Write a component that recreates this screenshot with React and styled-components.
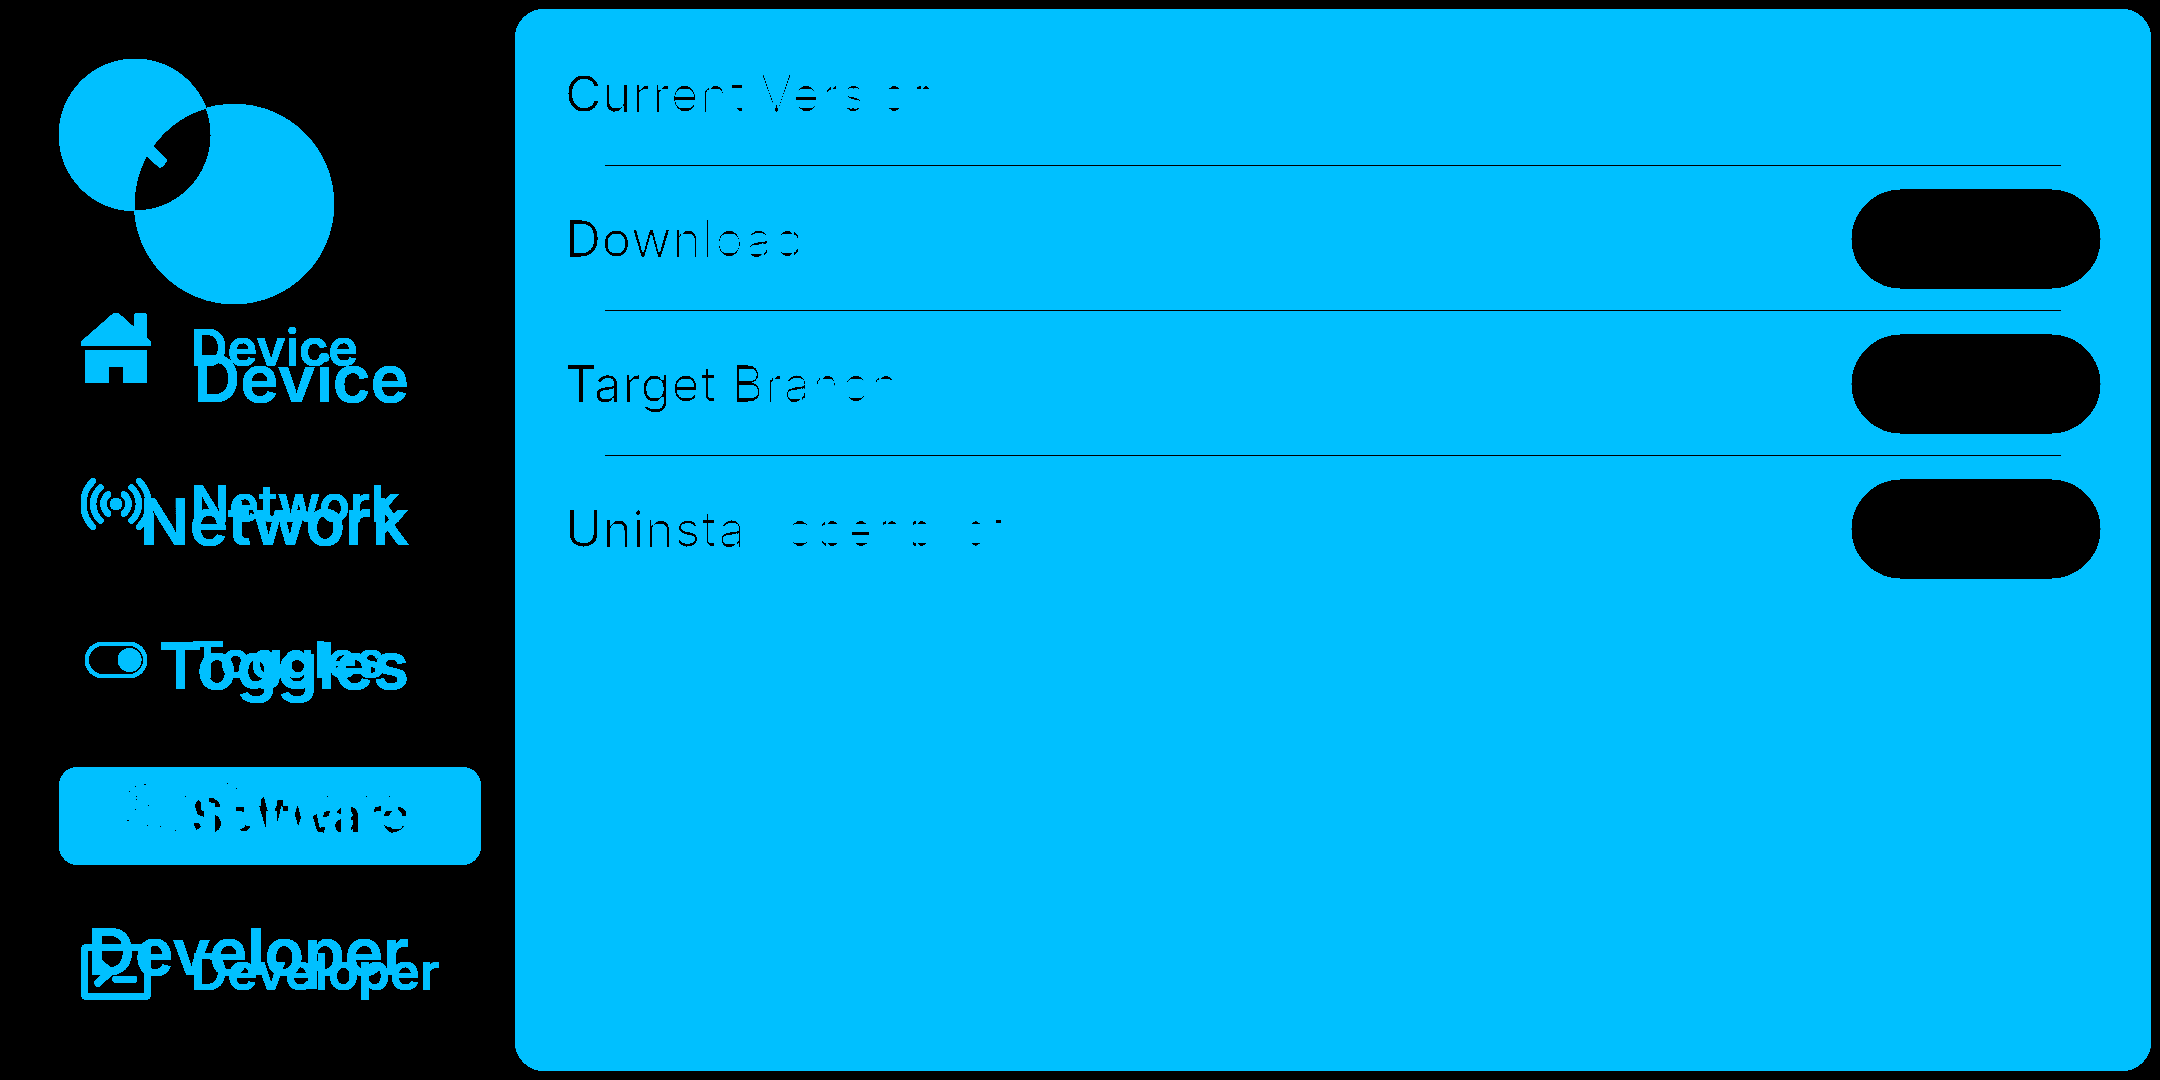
import React from "react";
import styled, { createGlobalStyle } from "styled-components";

const BLUE = "#00c0ff";

const GlobalStyle = createGlobalStyle`
  * { box-sizing: border-box; }
  body { margin: 0; background: #000; overflow: hidden; }
`;

const Screen = styled.div`
  display: flex;
  width: 2160px;
  height: 1080px;
  background: #000;
  color: ${BLUE};
  font-family: Inter, "Liberation Sans", sans-serif;
  filter: url(#two-tone);
`;

const Defs = styled.svg`
  position: absolute;
  width: 0;
  height: 0;
`;

const Sidebar = styled.aside`
  width: 515px;
  flex: none;
  display: grid;
  grid-template-rows: 270px 1fr;
  padding-left: 59px;
`;

const Logo = styled.svg`
  grid-area: 1 / 1;
  width: 276px;
  height: 246px;
  margin-top: 59px;
`;

const IconNav = styled.nav`
  grid-area: 2 / 1;
  display: flex;
  flex-direction: column;
`;

const NavRow = styled.div`
  height: 156px;
  display: flex;
  align-items: center;
`;

const NavPill = styled.div`
  display: grid;
  grid-template-columns: 70px 1fr;
  column-gap: 40px;
  align-items: center;
  width: 422px;
  height: 98px;
  padding-left: 22px;
  border-radius: 20px;
  background: ${(p) => (p.$active ? BLUE : "transparent")};
`;

const Icon = styled.svg`
  width: 70px;
  height: 70px;
  display: block;
`;

const SmallLabel = styled.span`
  font-size: 50.4px;
  font-weight: 600;
  line-height: 60px;
  white-space: nowrap;
  color: ${(p) => (p.$dark ? "#000" : BLUE)};
`;

const TextNav = styled.nav`
  grid-area: 2 / 1;
  display: flex;
  flex-direction: column;
  width: 350px;
  padding-top: 37px;
`;

const BigLabel = styled.span`
  height: 143.3px;
  line-height: 143.3px;
  font-size: 65px;
  font-weight: 600;
  text-align: right;
  white-space: nowrap;
`;

const Overlap = styled.div`
  position: absolute;
  left: 59px;
  top: 767px;
  width: 422px;
  height: 98px;
  border-radius: 20px;
  background: ${BLUE};
  color: #000;
  mix-blend-mode: lighten;
  display: flex;
  align-items: center;
  justify-content: flex-end;
  padding: 0 72px 14px 0;
`;

const OverlapLabel = styled.span`
  font-size: 65px;
  font-weight: 600;
  line-height: 80px;
`;

const Specks = styled.svg`
  position: absolute;
  left: 50px;
  top: 750px;
  width: 450px;
  height: 130px;
`;

const Panel = styled.main`
  width: 1636px;
  height: 1062px;
  margin-top: 9px;
  padding: 12px 50px 0 50px;
  border-radius: 30px;
  background: ${BLUE};
  isolation: isolate;
`;

const Row = styled.div`
  height: 145px;
  display: grid;
  grid-template-columns: 1fr 250px;
  grid-template-rows: 144px 1px;
  align-items: center;
`;

const Title = styled.span`
  grid-area: 1 / 1;
  height: 144px;
  line-height: 147px;
  font-size: 50px;
  font-weight: 400;
  white-space: nowrap;
  color: #000;
  background: ${BLUE};
`;

const TitleOverlay = styled(Title)`
  letter-spacing: ${(p) => p.$tracking}px;
  word-spacing: ${(p) => p.$wordGap || 0}px;
  mix-blend-mode: lighten;
`;

const ActionButton = styled.button`
  grid-area: 1 / 2;
  height: 100px;
  margin-top: 1px;
  border: 0;
  border-radius: 50px;
  background: #000;
`;

const Divider = styled.hr`
  grid-area: 2 / 1 / 3 / 3;
  width: auto;
  height: 1px;
  margin: 0 40px 0 40px;
  border: 0;
  background: #000;
`;

const HomeIcon = () => (
  <Icon viewBox="0 0 70 70" fill="currentColor">
    <path d="M32 1Q35 -1 38 1L53 14.500V5Q53 0 57 0H62Q66 0 66 5V25L70 29V33H0V29Z" />
    <path d="M5 37H65Q66 37 66 38V69Q66 70 65 70H42V54H28V70H5Q4 70 4 69V38Q4 37 5 37Z" />
  </Icon>
);

const NetworkIcon = () => (
  <Icon viewBox="0 0 70 70" fill="none" stroke="currentColor" strokeWidth="5.600" strokeLinecap="round">
    <circle cx="35" cy="35" r="6" fill="currentColor" stroke="none" />
    <path d="M12 12A32.200 32.200 0 0 0 12 58M58 12A32.200 32.200 0 0 1 58 58" />
    <path d="M19.500 18.500A22.200 22.200 0 0 0 19.500 51.500M50.500 18.500A22.200 22.200 0 0 1 50.500 51.500" />
    <path d="M27 25.500A12.200 12.200 0 0 0 27 44.500M43 25.500A12.200 12.200 0 0 1 43 44.500" />
  </Icon>
);

const ToggleIcon = () => (
  <Icon viewBox="0 0 70 70" fill="none" stroke="currentColor">
    <rect x="5.800" y="18.800" width="58.400" height="32.400" rx="16.200" strokeWidth="3.400" />
    <circle cx="48.600" cy="35" r="11.500" fill="currentColor" stroke="none" />
  </Icon>
);

const TerminalIcon = () => (
  <Icon viewBox="0 0 70 70" fill="none" stroke="currentColor" strokeLinecap="round" strokeLinejoin="round">
    <rect x="3.300" y="10.300" width="63.400" height="49.400" rx="2.500" strokeWidth="6.600" />
    <path d="M17 24L29 35L17 46" strokeWidth="6.500" />
    <path d="M35 42.300H52.500" strokeWidth="6.800" />
  </Icon>
);

const SPECKS = [
  [85, 36], [94, 34, 2], [79, 41], [86, 46], [86, 49], [98, 55], [85, 59], [77, 70, 2], [97, 75], [110, 76], [125, 80],
  [135, 46], [177, 33], [186, 38], [277, 46], [316, 46], [339, 46],
];

const items = [
  { name: "Device", icon: <HomeIcon /> },
  { name: "Network", icon: <NetworkIcon /> },
  { name: "Toggles", icon: <ToggleIcon /> },
  { name: "Software", icon: <Icon viewBox="0 0 70 70" />, active: true },
  { name: "Developer", icon: <TerminalIcon /> },
];

const rows = [
  { title: "Current Version", tracking: 0.64, wordGap: -2.2 },
  { title: "Download", tracking: 0.6, button: true },
  { title: "Target Branch", tracking: 0.32, button: true },
  { title: "Uninstall openpilot", tracking: 0.45, button: true },
];

export default function App() {
  return (
    <>
      <GlobalStyle />
      <Defs>
        <filter id="two-tone" x="0" y="0" width="100%" height="100%" colorInterpolationFilters="sRGB">
          <feColorMatrix values="0 0 0 0 0  0 0 0 0 0  0 0 40 0 -0.5  0 0 0 1 0" />
          <feColorMatrix values="0 0 0 0 0  0 0 0.753 0 0  0 0 1 0 0  0 0 0 1 0" />
        </filter>
      </Defs>
      <Screen>
        <Sidebar>
          <Logo viewBox="59 59 276 246" fill={BLUE}>
            <path
              fillRule="evenodd"
              d="M59 135a76 76 0 1 0 152 0a76 76 0 1 0 -152 0ZM134.300 204a99.800 99.800 0 1 0 199.600 0a99.800 99.800 0 1 0 -199.600 0Z"
            />
            <path d="M147 140L167 160.500Q164 165 160 168L143 152Z" />
          </Logo>
          <IconNav>
            {items.map((it) => (
              <NavRow key={it.name}>
                <NavPill $active={it.active}>
                  {it.icon}
                  <SmallLabel $dark={it.active}>{it.name}</SmallLabel>
                </NavPill>
              </NavRow>
            ))}
          </IconNav>
          <TextNav>
            {items.map((it) => (
              <BigLabel key={it.name}>{it.active ? "" : it.name}</BigLabel>
            ))}
          </TextNav>
          <Overlap>
            <OverlapLabel>Software</OverlapLabel>
          </Overlap>
          <Specks viewBox="0 0 450 130" shapeRendering="crispEdges">
            {SPECKS.map(([x, y, w = 1]) => (
              <rect key={`${x}-${y}`} x={x} y={y} width={w} height="1" />
            ))}
          </Specks>
        </Sidebar>
        <Panel>
          {rows.map((r, i) => (
            <Row key={r.title}>
              <Title>{r.title}</Title>
              <TitleOverlay aria-hidden="true" $tracking={r.tracking} $wordGap={r.wordGap}>
                {r.title}
              </TitleOverlay>
              {r.button && <ActionButton aria-label={r.title} />}
              {i < rows.length - 1 && <Divider />}
            </Row>
          ))}
        </Panel>
      </Screen>
    </>
  );
}
